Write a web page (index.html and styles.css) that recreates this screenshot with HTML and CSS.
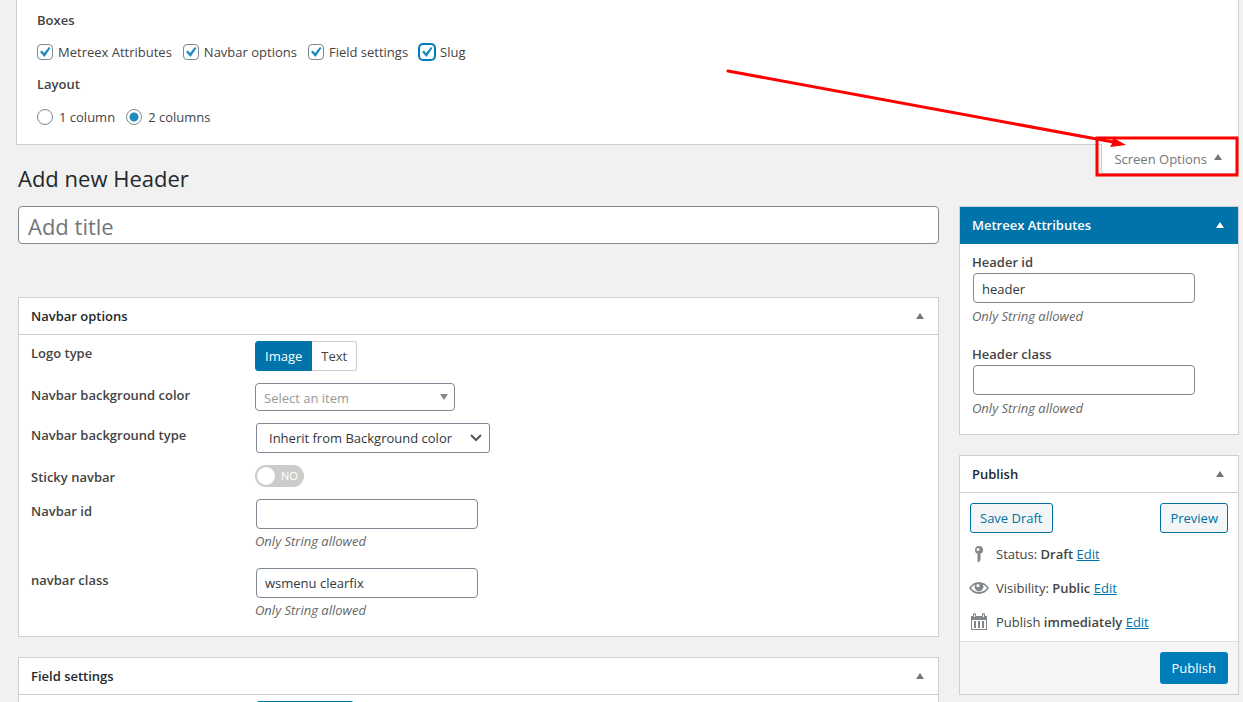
FILE: index.html
```html
<!DOCTYPE html>
<html lang="en">
<head>
<meta charset="utf-8">
<meta name="viewport" content="width=device-width, initial-scale=1">
<title>Add new Header</title>
<link rel="stylesheet" href="styles.css">
</head>
<body>
<header class="screen-meta">
  <form class="screen-panel">
    <fieldset class="group">
      <legend>Boxes</legend>
      <div class="choices boxes">
        <label><input type="checkbox" checked><span>Metreex Attributes</span></label>
        <label><input type="checkbox" checked><span>Navbar options</span></label>
        <label><input type="checkbox" checked><span>Field settings</span></label>
        <label><input type="checkbox" class="is-focused" checked><span>Slug</span></label>
      </div>
    </fieldset>
    <fieldset class="group">
      <legend>Layout</legend>
      <div class="choices columns">
        <label><input type="radio" name="columns"><span>1 column</span></label>
        <label><input type="radio" name="columns" checked><span>2 columns</span></label>
      </div>
    </fieldset>
  </form>
  <button type="button" class="screen-toggle">Screen Options
    <svg class="tri" viewBox="0 0 8 6" aria-hidden="true"><path d="M4 0 8 6H0z"/></svg>
  </button>
  <svg class="pointer" viewBox="0 0 516 110" aria-hidden="true">
    <path class="stroke" d="M5 3 390 74"/>
    <path class="head" d="M389 69 403 77 387 79 390 74z"/>
    <path class="stroke" d="M374 70H514V107H374z"/>
  </svg>
</header>

<main class="editor">
  <div class="main-col">
    <h1>Add new Header</h1>
    <input class="title-input" type="text" placeholder="Add title" aria-label="Add title">

    <section class="box">
      <div class="box-head"><h2>Navbar options</h2>
        <button type="button" class="collapse" aria-label="Toggle Navbar options"><svg class="tri" viewBox="0 0 8 6"><path d="M4 0 8 6H0z"/></svg></button>
      </div>
      <div class="fields">
        <div class="row"><span class="name">Logo type</span>
          <div class="segmented"><button type="button" class="on">Image</button><button type="button">Text</button></div>
        </div>
        <div class="row"><label class="name" for="bgcolor">Navbar background color</label>
          <div class="pick small"><select id="bgcolor"><option>Select an item</option></select>
            <svg class="tri" viewBox="0 0 8 6" aria-hidden="true"><path d="M0 0H8L4 6z"/></svg></div>
        </div>
        <div class="row"><label class="name" for="bgtype">Navbar background type</label>
          <div class="pick large"><select id="bgtype"><option>Inherit from Background color</option></select>
            <svg class="chevron" viewBox="0 0 12 8" aria-hidden="true"><path d="M1 1 6 6 11 1"/></svg></div>
        </div>
        <div class="row"><label class="name" for="sticky">Sticky navbar</label>
          <label class="switch"><input id="sticky" type="checkbox"><span>NO</span></label>
        </div>
        <div class="row"><label class="name" for="navid">Navbar id</label>
          <div class="entry"><input class="text" id="navid" type="text"><p>Only String allowed</p></div>
        </div>
        <div class="row"><label class="name" for="navclass">navbar class</label>
          <div class="entry"><input class="text" id="navclass" type="text" value="wsmenu clearfix"><p>Only String allowed</p></div>
        </div>
      </div>
    </section>

    <section class="box">
      <div class="box-head"><h2>Field settings</h2>
        <button type="button" class="collapse" aria-label="Toggle Field settings"><svg class="tri" viewBox="0 0 8 6"><path d="M4 0 8 6H0z"/></svg></button>
      </div>
      <div class="fields">
        <div class="row"><span class="name"></span><button type="button" class="outline add" aria-label="Add field"></button></div>
      </div>
    </section>
  </div>

  <aside class="side-col">
    <section class="box">
      <div class="box-head accent"><h2>Metreex Attributes</h2>
        <button type="button" class="collapse" aria-label="Toggle Metreex Attributes"><svg class="tri" viewBox="0 0 8 6"><path d="M4 0 8 6H0z"/></svg></button>
      </div>
      <div class="attributes">
        <div class="entry"><label for="headid">Header id</label><input class="text" id="headid" type="text" value="header"><p>Only String allowed</p></div>
        <div class="entry"><label for="headclass">Header class</label><input class="text" id="headclass" type="text"><p>Only String allowed</p></div>
      </div>
    </section>

    <section class="box">
      <div class="box-head"><h2>Publish</h2>
        <button type="button" class="collapse" aria-label="Toggle Publish"><svg class="tri" viewBox="0 0 8 6"><path d="M4 0 8 6H0z"/></svg></button>
      </div>
      <div class="drafts"><button type="button" class="outline">Save Draft</button><button type="button" class="outline">Preview</button></div>
      <ul class="status">
        <li><svg viewBox="0 0 20 20" aria-hidden="true"><path fill-rule="evenodd" d="M10 2a4 4 0 1 1 0 8 4 4 0 0 1 0-8zM9 4a1.500 1.500 0 1 0 0 3 1.500 1.500 0 0 0 0-3z"/><path d="M8.500 9.500h3V16L9.500 18.500l-1-1z"/></svg>
          <span>Status: <b>Draft</b> <a href="#status">Edit</a></span></li>
        <li><svg viewBox="0 0 20 20" aria-hidden="true"><path fill-rule="evenodd" d="M10 4c4 0 7.500 2.300 10 6-2.500 3.700-6 6-10 6S2.500 13.700 0 10c2.500-3.700 6-6 10-6zM6 6.500C4.400 7.300 3 8.500 2 10c2 2.600 4.800 4 8 4s6-1.400 8-4c-1-1.500-2.400-2.700-4-3.500A5 5 0 0 1 10 13.500 5 5 0 0 1 6 6.500zM9 6a1.600 1.600 0 1 0 0 3.200A1.600 1.600 0 0 0 9 6z"/></svg>
          <span>Visibility: <b>Public</b> <a href="#visibility">Edit</a></span></li>
        <li><svg viewBox="0 0 20 20" aria-hidden="true"><path fill-rule="evenodd" d="M2 4h2V2.500a1 1 0 0 1 3 0V4h6V2.500a1 1 0 0 1 3 0V4h2v14H2zm1 4v9h14V8zm2 1h2v7H5zm4 0h2v7H9zm4 0h2v7h-2zM5 2.500V5h1V2.500zm9 0V5h1V2.500z"/></svg>
          <span>Publish <b>immediately</b> <a href="#schedule">Edit</a></span></li>
      </ul>
      <div class="publish-bar"><button type="button" class="primary">Publish</button></div>
    </section>
  </aside>
</main>
</body>
</html>
```

FILE: styles.css
```css
* { box-sizing: border-box; }

body {
  margin: 0;
  background: #f1f1f1;
  color: #444;
  font: 13px/20px "Open Sans", "Noto Sans", sans-serif;
}

h1, h2, p, ul, fieldset { margin: 0; padding: 0; }
fieldset { border: 0; min-width: 0; }
button, input, select { font: inherit; color: inherit; }
button { cursor: pointer; }
svg { display: block; }
b, legend, .name, .entry label { font-weight: 600; }

.tri { width: 8px; height: 6px; fill: #72777c; }

/* Screen options panel */
.screen-meta {
  position: relative;
  display: flex;
  flex-direction: column;
  align-items: stretch;
  padding: 0 4px 0 16px;
}
.screen-panel {
  padding: 10px 20px 16px;
  background: #fff;
  border: 1px solid #ccd0d4;
  border-top: 0;
}
.group legend { padding: 0; }
.choices {
  display: flex;
  align-items: center;
  gap: 11px;
  height: 44px;
}
.columns { height: 34px; padding-top: 12px; }
.choices label { display: flex; align-items: center; gap: 5px; }
.columns label { gap: 6px; }
.choices input {
  appearance: none;
  width: 16px;
  height: 16px;
  margin: 0;
  border: 1px solid #7e8993;
  border-radius: 4px;
  background: #fff center / 14px 14px no-repeat;
}
.choices input[type="checkbox"]:checked {
  background-image: url("data:image/svg+xml,%3Csvg xmlns='http://www.w3.org/2000/svg' viewBox='0 0 14 14'%3E%3Cpath d='M2 7 4 5.500 6 8 11 2 12.500 3 6.500 12z' fill='%231e8cbe'/%3E%3C/svg%3E");
}
.choices input[type="radio"] { border-radius: 50%; }
.choices input[type="radio"]:checked {
  background-image: radial-gradient(circle, #1e8cbe 4px, transparent 5px);
}
.choices .is-focused { border-color: #007cba; box-shadow: 0 0 0 1px #007cba; }

.screen-toggle {
  display: flex;
  align-items: center;
  align-self: flex-end;
  gap: 7px;
  height: 30px;
  margin: -1px 0 0;
  padding: 0 16px 0 12px;
  background: #fff;
  border: 1px solid #ccd0d4;
  border-top: 0;
  border-radius: 0 0 4px 4px;
  color: #72777c;
}
.screen-toggle .tri { margin-bottom: 4px; }
.pointer {
  position: absolute;
  right: 4px;
  bottom: -4px;
  width: 516px;
  height: 110px;
  pointer-events: none;
}
.pointer .stroke { fill: none; stroke: #f00; stroke-width: 3; stroke-linecap: round; }
.pointer .head { fill: #f00; }

/* Editor columns */
.editor {
  display: grid;
  grid-template-columns: minmax(0, 1fr) 280px;
  gap: 20px;
  padding: 0 4px 0 18px;
}
.main-col { margin-top: -10px; }
.side-col { margin-top: 32px; }

h1 {
  margin-bottom: 13px;
  color: #23282d;
  font-size: 22px;
  font-weight: 400;
  line-height: 29px;
}
.title-input {
  display: block;
  width: 100%;
  height: 38px;
  margin-bottom: 53px;
  padding: 2px 9px 0;
  background: #fff;
  border: 1px solid #7e8993;
  border-radius: 4px;
  font-size: 22px;
}
.title-input::placeholder { color: #72777c; }

.box {
  margin-bottom: 20px;
  background: #fff;
  border: 1px solid #ccd0d4;
}
.box-head {
  display: flex;
  align-items: center;
  justify-content: space-between;
  height: 37px;
  padding: 0 14px 0 12px;
  border-bottom: 1px solid #ccd0d4;
}
.box-head h2 { color: #23282d; font-size: 13px; font-weight: 600; }
.accent { background: #0073aa; border-color: #0073aa; }
.accent h2 { color: #fff; }
.accent .tri { fill: #fff; }
.collapse { padding: 0; background: none; border: 0; }

/* Field rows */
.fields { padding-bottom: 5px; }
.row {
  display: grid;
  grid-template-columns: 224px minmax(0, 1fr);
  justify-items: start;
  padding: 6px 12px;
}
.name { padding-top: 2px; }

.segmented { display: flex; }
.segmented button {
  height: 30px;
  padding: 0 9px;
  background: #fff;
  border: 1px solid #ccc;
  border-left: 0;
  border-radius: 0 3px 3px 0;
}
.segmented .on {
  background: #0073aa;
  border: 1px solid #0073aa;
  border-radius: 3px 0 0 3px;
  color: #fff;
}

.pick { display: grid; align-items: center; }
.pick select, .pick svg { grid-area: 1 / 1; }
.pick svg { justify-self: end; margin-right: 7px; pointer-events: none; }
.pick select {
  appearance: none;
  width: 100%;
  background: #fff;
  border: 1px solid #7e8993;
  border-radius: 4px;
}
.small { width: 200px; }
.small select { height: 28px; padding: 2px 8px 0; color: #999; }
.small .tri { fill: #888; }
.large { width: 235px; padding-left: 1px; }
.large select { height: 30px; padding: 0 12px; color: #32373c; border-radius: 3px; }
.pick .chevron { width: 12px; height: 8px; margin-right: 8px; fill: none; stroke: #555; stroke-width: 2; }

.switch {
  display: flex;
  align-items: center;
  gap: 6px;
  width: 49px;
  height: 22px;
  padding: 0 2px;
  background: #ccc;
  border-radius: 11px;
  color: #fff;
  font-size: 11px;
}
.switch input {
  appearance: none;
  width: 18px;
  height: 18px;
  margin: 0;
  background: #fff;
  border-radius: 50%;
}

.entry { display: flex; flex-direction: column; align-items: flex-start; }
.text {
  width: 222px;
  height: 30px;
  margin: 0 1px;
  padding: 0 8px;
  background: #fff;
  border: 1px solid #7e8993;
  border-radius: 4px;
  color: #32373c;
}
.entry p { padding-bottom: 3px; color: #666; font-style: italic; line-height: 24px; }

.attributes { display: grid; gap: 12px; padding: 8px 12px; }
.attributes .entry label { line-height: 21px; }
.attributes .text { padding-top: 2px; }
.attributes .entry p { padding: 1px 0 4px; }

/* Publish */
.outline {
  height: 30px;
  padding: 0 9px;
  background: #f3f5f6;
  border: 1px solid #0071a1;
  border-radius: 3px;
  color: #0071a1;
}
.add { width: 98px; margin-left: 1px; }
.drafts { display: flex; justify-content: space-between; padding: 10px 10px 4px; }
.status { padding-bottom: 2px; list-style: none; }
.status li { display: flex; align-items: center; gap: 7px; height: 34px; padding: 0 9px; }
.status svg { width: 20px; height: 20px; fill: #82878c; }
.status a { color: #0073aa; }
.publish-bar {
  display: flex;
  justify-content: flex-end;
  padding: 10px;
  background: #f5f5f5;
  border-top: 1px solid #ddd;
}
.primary {
  height: 32px;
  padding: 0 12px;
  background: #007cba;
  border: 0;
  border-radius: 3px;
  color: #fff;
}
.attributes { padding-bottom: 10px; }
```
